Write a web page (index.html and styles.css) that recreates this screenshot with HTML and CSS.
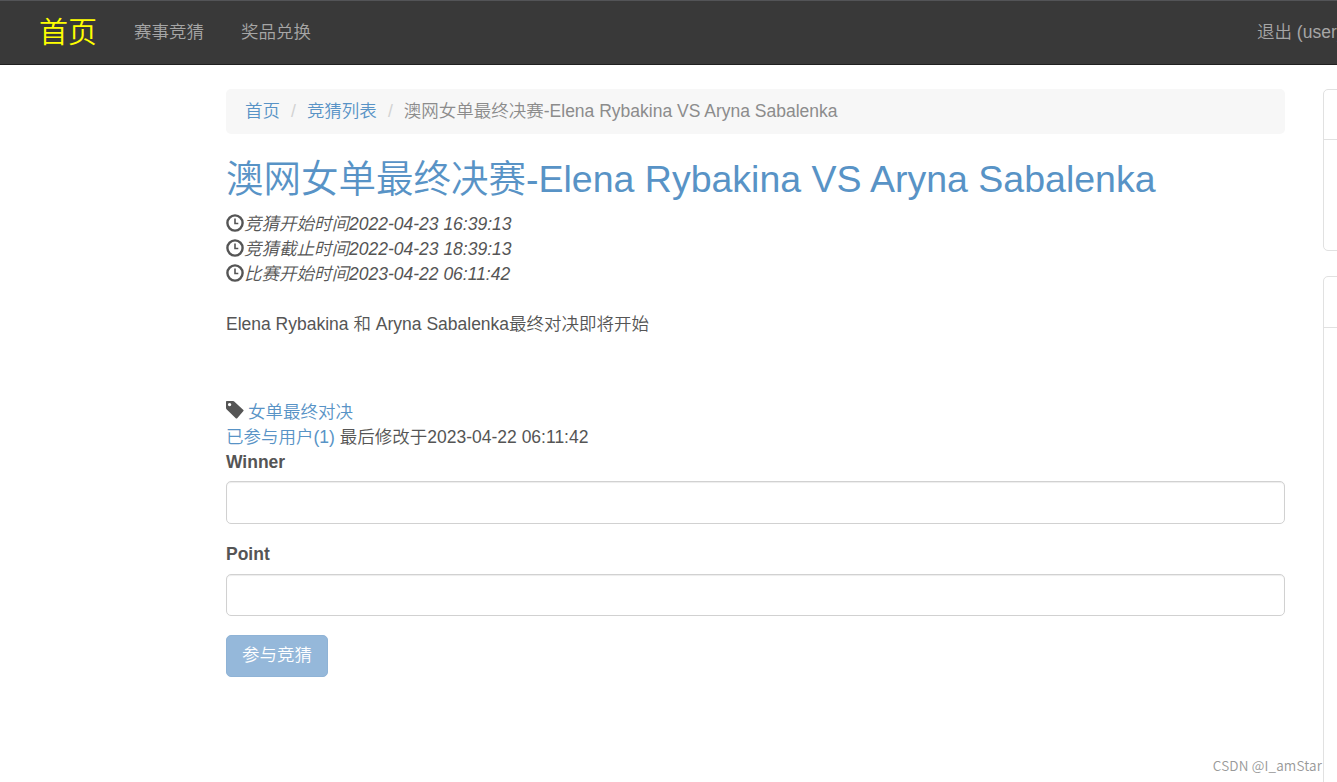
FILE: index.html
```
<!DOCTYPE html>
<html lang="zh-CN">
<head>
    <meta charset="UTF-8">
    <meta name="viewport" content="width=device-width, initial-scale=1.0">
    <title>澳网女单最终决赛-Elena Rybakina VS Aryna Sabalenka</title>
    <link rel="stylesheet" href="styles.css">
</head>
<body>
    <svg class="sprite" width="0" height="0">
        <symbol id="time" viewBox="0 0 18 18">
            <circle cx="9" cy="9" r="7.6" fill="none" stroke="currentColor" stroke-width="2.4"/>
            <path d="M9 4.6v4.9h3.3" fill="none" stroke="currentColor" stroke-width="1.6"/>
        </symbol>
        <symbol id="tag" viewBox="0 0 18 18">
            <path fill="currentColor" fill-rule="evenodd" d="M0 .8Q0 0 .8 0h6.4q.6 0 1 .4l9.2 8.7q.5.5 0 1l-6.4 7.3q-.5.4-1 0L.5 8.2Q0 7.7 0 7.1zM3.6 1.9a1.7 1.7 0 1 0 0 3.4 1.7 1.7 0 0 0 0-3.4z"/>
        </symbol>
    </svg>

    <nav class="navbar">
        <a class="brand" href="#">首页</a>
        <ul class="nav">
            <li><a href="#">赛事竞猜</a></li>
            <li><a href="#">奖品兑换</a></li>
        </ul>
        <a class="logout" href="#">退出 (user)</a>
    </nav>

    <div class="container">
        <div class="main">
            <ul class="breadcrumb">
                <li><a href="#">首页</a></li>
                <li><a href="#">竞猜列表</a></li>
                <li class="active">澳网女单最终决赛-Elena Rybakina VS Aryna Sabalenka</li>
            </ul>

            <div class="post">
                <h2><a href="#">澳网女单最终决赛-Elena Rybakina VS Aryna Sabalenka</a></h2>
                <div class="author">
                    <div><svg class="icon"><use href="#time"/></svg><em>竞猜开始时间2022-04-23 16:39:13</em></div>
                    <div><svg class="icon"><use href="#time"/></svg><em>竞猜截止时间2022-04-23 18:39:13</em></div>
                    <div><svg class="icon"><use href="#time"/></svg><em>比赛开始时间2023-04-22 06:11:42</em></div>
                </div>
                <p class="content">Elena Rybakina 和 Aryna Sabalenka最终对决即将开始</p>
                <div class="post-nav">
                    <div><svg class="icon tag"><use href="#tag"/></svg><a href="#">女单最终对决</a></div>
                    <div><a href="#">已参与用户(1)</a> 最后修改于2023-04-22 06:11:42</div>
                </div>
            </div>

            <form>
                <div class="form-group">
                    <label for="winner">Winner</label>
                    <input type="text" id="winner" class="form-control">
                </div>
                <div class="form-group">
                    <label for="point">Point</label>
                    <input type="text" id="point" class="form-control">
                </div>
                <button type="submit" class="btn" disabled>参与竞猜</button>
            </form>
        </div>

        <div class="side">
            <div class="panel">
                <div class="panel-heading"></div>
                <div class="panel-body"></div>
            </div>
            <div class="panel panel-long">
                <div class="panel-heading"></div>
                <div class="panel-body"></div>
            </div>
        </div>
    </div>

    <div class="watermark">CSDN @I_amStar</div>
</body>
</html>
```

FILE: styles.css
```
* {
    box-sizing: border-box;
}
body {
    margin: 0;
    height: 782px;
    overflow: hidden;
    position: relative;
    background-color: #fff;
    color: #555;
    font-family: "Liberation Sans", "Noto Sans CJK SC", sans-serif;
    font-size: 17.5px;
    font-weight: 350;
    line-height: 25px;
}
a {
    color: #5893c6;
    text-decoration: none;
}
ul {
    margin: 0;
    padding: 0;
    list-style: none;
}
.sprite {
    position: absolute;
}

.navbar {
    display: flex;
    align-items: center;
    height: 65px;
    padding-left: 39px;
    background-color: #393939;
    border-top: 1px solid #535457;
    border-bottom: 1px solid #202020;
}
.navbar a {
    color: #a6a6a6;
    white-space: nowrap;
}
.navbar .brand {
    width: 95px;
    padding-top: 1px;
    color: #ff0;
    font-size: 29px;
}
.nav {
    display: flex;
    gap: 37px;
}
.logout {
    width: 80px;
    margin-left: auto;
}

.container {
    display: grid;
    grid-template-columns: 1059px 300px;
    gap: 38px;
    padding: 24px 0 0 226px;
}

.breadcrumb {
    display: flex;
    height: 45px;
    padding: 10px 19px;
    background-color: #f7f7f7;
    border-radius: 5px;
}
.breadcrumb li + li::before {
    content: "/";
    padding: 0 11px;
    color: #d2d2d2;
}
.breadcrumb .active {
    color: #8c8c8c;
}

h2 {
    margin: 25px 0 12px;
    font-size: 37.5px;
    font-weight: 350;
    line-height: 41px;
}
.icon {
    width: 18px;
    height: 18px;
    vertical-align: -2px;
}
.tag {
    margin-right: 4px;
    vertical-align: -1px;
}
.content {
    margin: 25px 0 63px;
}

.form-group {
    margin-bottom: 19px;
}
label {
    display: block;
    margin-bottom: 7px;
    font-weight: bold;
}
.form-control {
    display: block;
    width: 100%;
    height: 42px;
    padding: 7px 15px;
    border: 1px solid #d1d1d1;
    border-radius: 5px;
    box-shadow: inset 0 1px 1px rgba(0, 0, 0, .075);
    font: inherit;
}
#winner {
    height: 43px;
    margin-top: -1px;
}
#winner,
#point {
    outline: none;
}
.form-group:nth-child(2) {
    margin-top: -1px;
}
.btn {
    display: block;
    width: 102px;
    height: 42px;
    padding: 0 0 2px;
    border: 1px solid #8fb3d6;
    border-radius: 5px;
    background-color: #95b8da;
    color: #fff;
    font: inherit;
}

.panel {
    height: 162px;
    margin-bottom: 25px;
    border: 1px solid #e1e1e1;
    border-radius: 5px;
}
.panel-heading {
    height: 50px;
    border-bottom: 1px solid #e1e1e1;
}
.panel-long {
    height: 600px;
}
.panel-long .panel-heading {
    height: 51px;
}

.watermark {
    position: absolute;
    right: 15px;
    bottom: 7px;
    color: #999;
    font-family: "Noto Sans CJK SC", sans-serif;
    font-size: 13.5px;
    letter-spacing: .15px;
    line-height: 20px;
}
```
